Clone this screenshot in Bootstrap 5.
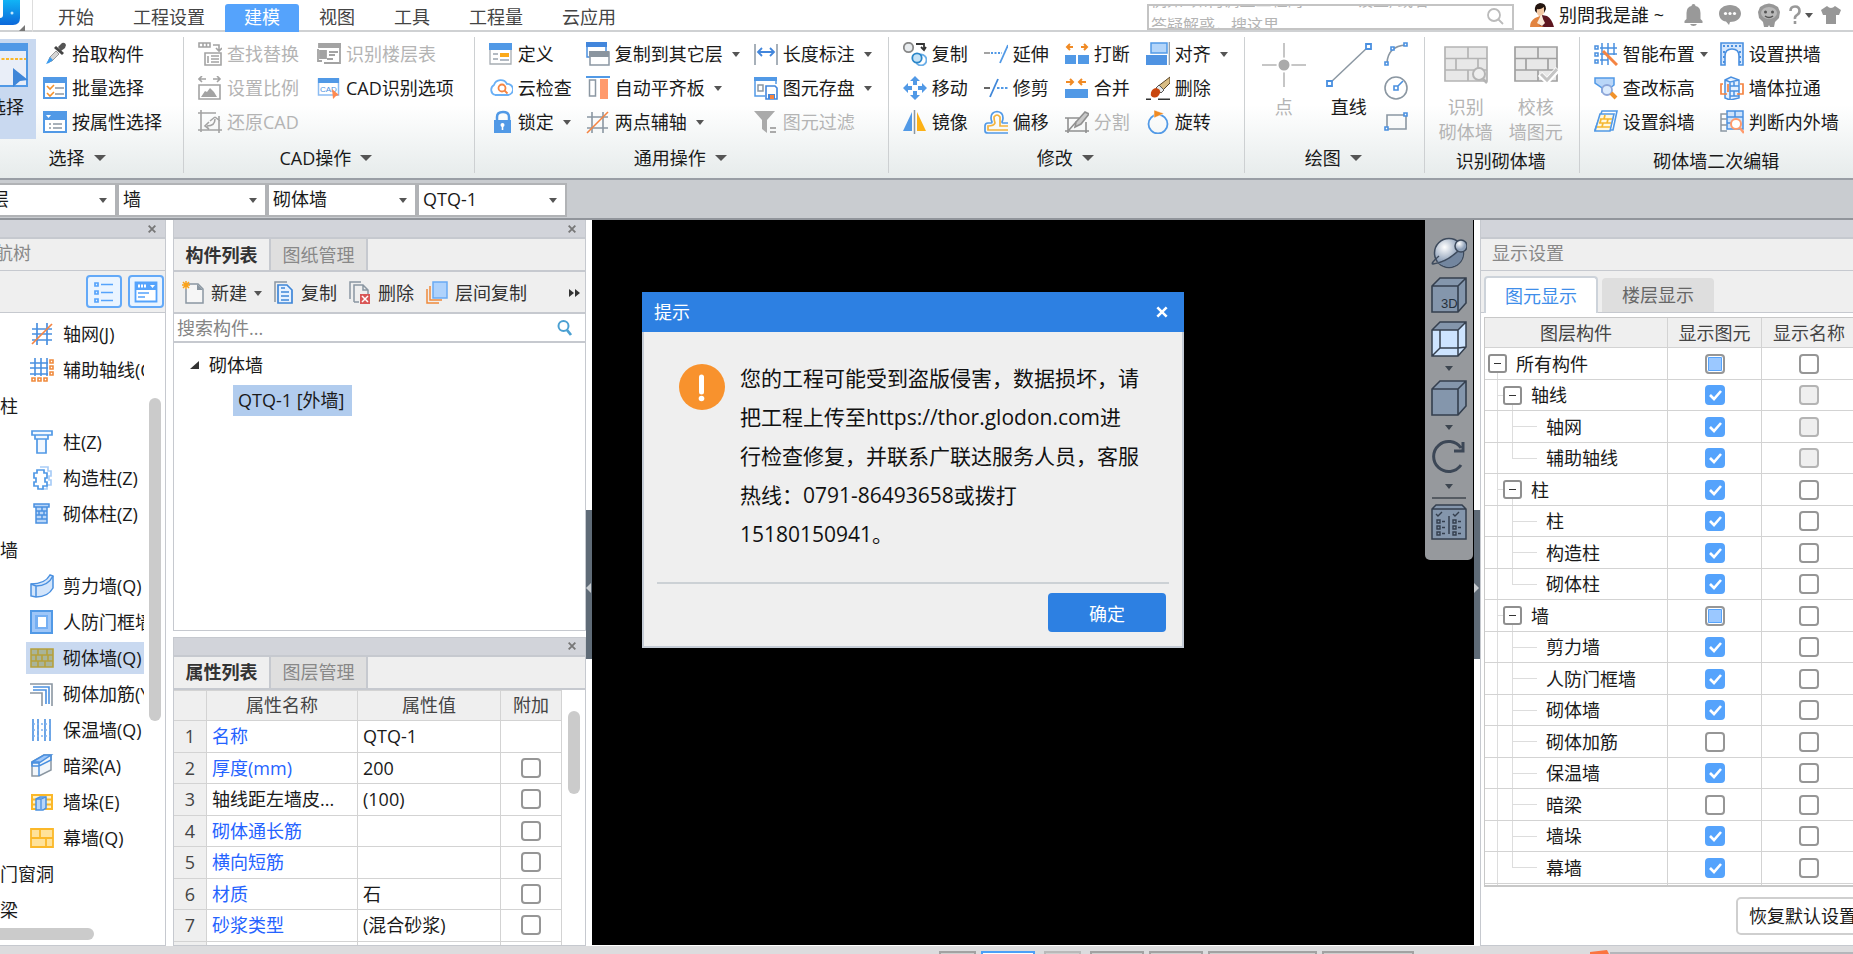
<!DOCTYPE html>
<html lang="zh-CN">
<head>
<meta charset="utf-8">
<meta name="viewport" content="width=device-width, initial-scale=1">
<title>建模</title>
<link rel="stylesheet" href="https://cdn.jsdelivr.net/npm/bootstrap@5.3.0/dist/css/bootstrap.min.css">
<script src="https://cdn.jsdelivr.net/npm/bootstrap@5.3.0/dist/js/bootstrap.bundle.min.js"></script>
<style>
  :root { --blue:#5199e6; --sky:#55a3fc; --line:#c6c9cf; --pane:#efefef; --off:#b4b4b4; --ink:#1a1a1a; }
  body { font:18px/24px "Open Sans","Noto Sans CJK SC",sans-serif; color:var(--ink); background:#fff; height:100vh; overflow:hidden; }
  button { background:none; border:0; padding:0; color:inherit; white-space:nowrap; }
  svg { flex:none; display:block; }
  .caret { flex:none; width:0; height:0; border:4px solid transparent; border-top:5px solid #555; border-bottom:0; margin-left:4px; }
  .caret-lg { border-width:6px 6px 0; margin-left:9px; }

  /* title bar */
  .title-bar { height:32px; border-bottom:2px solid #cfd1d3; padding-right:12px; }
  .app-logo { width:33px; height:32px; border-right:1px solid #ddd; }
  .main-tabs { gap:1px; padding-left:6px; color:#444; }
  .main-tabs a { color:inherit; text-decoration:none; padding:1px 19px 3px; margin-top:4px; height:28px; }
  .main-tabs a.current { background:var(--sky); color:#fff; border-radius:3px 3px 0 0; }
  .ask-box { width:367px; height:26px; border:2px solid #c4c4c4; margin-top:4px; }
  .ask-box textarea { border:0; resize:none; outline:0; overflow:hidden; width:290px; height:48px; margin-top:-18px; padding:0 2px; font-size:16px; line-height:25px; }
  .ask-box textarea::placeholder { color:#b4b4b4; opacity:1; }
  .sys-icons { margin-left:20px; }

  /* ribbon */
  .ribbon { height:148px; border-bottom:2px solid #999ea5; background:linear-gradient(#fff 0,#fff 50%,#e6ebeb 100%); padding-top:5px; }
  .rgroup { position:relative; padding:0 17px 0 14px; }
  .rgroup::after { content:""; position:absolute; right:0; top:0; height:136px; width:1px; background:#cdd0d2; }
  .rgroup:last-child::after { display:none; }
  .cmds { display:grid; grid-auto-flow:column; grid-template-rows:repeat(3,34px); column-gap:16px; justify-items:start; }
  .cmd { display:flex; align-items:center; gap:5px; }
  .off, .cmd:disabled { color:var(--off); }
  .rlabel { height:38px; display:flex; align-items:center; justify-content:center; }
  .rlabel.plain { padding-top:6px; }
  .g-select { margin-left:-36px; padding:0 22px 0 12px; }
  .g-select .rlabel { padding-left:16px; }
  .g-cad { padding-right:21px; }
  .g-cad .cmds { column-gap:18px; }
  .g-common .cmds { column-gap:14px; }
  .g-edit { padding-right:24px; }
  .g-edit .cmds { column-gap:12px; }
  .big { display:flex; flex-direction:column; align-items:center; padding-top:6px; height:102px; line-height:25px; }
  .big svg { margin-bottom:8px; }
  .big.chosen { width:60px; height:100px; background:#c9d9f0; margin:2px 7px 0 0; padding-top:4px; }
  .pt-big { margin:0 20px 0 3px; }

  /* selector bar */
  .pick-bar { height:40px; background:#c9ccd0; border-bottom:2px solid #91959b; padding-top:3px; }
  .pick-bar select { appearance:none; width:150px; height:34px; border:2px solid #b1b3b6; border-radius:0; padding:0 4px 2px; color:var(--ink);
    background:#fff url("data:image/svg+xml,%3Csvg xmlns='http://www.w3.org/2000/svg' width='8' height='5'%3E%3Cpath d='M0 0h8L4 5z' fill='%23555'/%3E%3C/svg%3E") no-repeat right 8px center; }
  .pick-bar select:first-child { margin-left:-33px; }

  /* docked panes */
  .pane { display:flex; flex-direction:column; border:1px solid var(--line); border-top:0; background:#fff; min-height:0; overflow:hidden; }
  .grip { height:19px; flex:none; background:#d2d4da; border-bottom:2px solid var(--line); display:flex; align-items:center; justify-content:flex-end; padding-right:8px; }
  .pane-head { height:32px; flex:none; background:var(--pane); border-bottom:1px solid var(--line); color:#888; }
  .nav-pane { width:166px; border-left:0; }
  .nav-pane .pane-head { padding:2px 0 0; }
  .nav-pane .pane-head span { margin-left:-23px; }
  .nav-tools { height:42px; flex:none; background:var(--pane); border-bottom:1px solid var(--line); display:flex; gap:6px; justify-content:flex-end; padding:4px 1px 0 0; }
  .nav-tools button { width:36px; height:33px; border:2px solid #63a9f8; border-radius:4px; background:#eaf4ff; display:flex; align-items:center; justify-content:center; }
  .nav-list { width:144px; list-style:none; margin:0; padding:3px 0 0; overflow:hidden; white-space:nowrap; }
  .nav-list li { height:36px; display:flex; align-items:center; gap:9px; padding-left:30px; }
  .nav-list li.cat { padding-left:0; }
  .nav-list li.chosen { background:linear-gradient(#c9d9f0,#c9d9f0) 26px 2px / 118px 32px no-repeat; }
  .thumb { position:absolute; background:#cbcbcb; border-radius:6px; }
  .thumb-v { right:4px; width:12px; }
  .nav-pane .thumb-v { top:178px; height:323px; }
  .thumb-h { left:-10px; width:104px; height:12px; bottom:5px; }

  .mid-col { width:413px; gap:6px; margin-left:7px; }
  .comp-pane { flex:4 1 0; }
  .prop-pane { flex:3 1 0; border-top:1px solid var(--line); }
  .tab-strip { height:33px; flex:none; background:var(--pane); border-bottom:2px solid var(--line); display:flex; }
  .tab-strip button { width:97px; border-right:2px solid var(--line); color:#888; background:#dfdfdf; }
  .tab-strip button.current { background:var(--pane); color:#333; font-weight:600; }
  .comp-tools { height:42px; flex:none; background:var(--pane); border-bottom:2px solid var(--line); display:flex; align-items:center; color:#333; padding:2px 3px 0 8px; }
  .comp-tools .cmd { gap:7px; margin-right:12px; }
  .find-row { height:29px; flex:none; border-bottom:2px solid var(--line); display:flex; align-items:center; padding:0 12px 0 3px; }
  .find-row input { border:0; outline:0; padding:0; flex:1; min-width:0; line-height:24px; }
  .find-row input::placeholder { color:#858585; opacity:1; }
  .tree-node { display:flex; align-items:center; gap:9px; padding:10px 0 0 15px; }
  .tree-leaf { display:inline-block; margin:8px 0 0 59px; padding:3px 8px 4px 5px; background:#b1ccee; }

  .sheet { table-layout:fixed; background:#fff; }
  .sheet th, .sheet td { border:1px solid #d3d3d3; padding:0 5px; font-weight:400; white-space:nowrap; overflow:hidden; }
  .sheet tr { height:32px; }
  .sheet tbody tr:nth-child(even) { height:31px; }
  .sheet thead th { background:var(--pane); text-align:center; color:#444; padding:0; }
  .sheet tbody th { background:var(--pane); text-align:center; color:#444; padding:0; }
  .sheet .pick { text-align:center; padding:0; }
  .props { width:388px; margin-left:-1px; }
  .sheet thead tr { height:30px; }
  .props .key { color:#2563ff; }
  .prop-body { flex:1; min-height:0; overflow:hidden; position:relative; }
  .prop-body .thumb-v { top:21px; height:83px; right:5px; }
  .tick { appearance:none; display:block; margin:0 auto; width:20px; height:20px; border:2px solid #969696; border-radius:4px; background:#fff center/16px no-repeat; }
  .tick:disabled { background-color:#efefef; border-color:#b4b4b4; }
  .tick:checked { border-color:var(--sky); background-color:var(--sky); background-image:url("data:image/svg+xml,%3Csvg xmlns='http://www.w3.org/2000/svg' viewBox='0 0 16 16'%3E%3Cpath d='M3 8l4 4 7-8' fill='none' stroke='%23fff' stroke-width='2.6'/%3E%3C/svg%3E"); }
  .tick:indeterminate { background-image:linear-gradient(#9bc8ff,#9bc8ff); background-size:12px; box-shadow:inset 0 0 0 1px #fff, inset 0 0 0 2px var(--sky); }

  /* viewport */
  .side-handle { width:6px; position:relative; }
  .side-handle::before { content:""; position:absolute; left:0; right:0; top:40%; height:149px; background:#5f6b77; }
  .side-handle svg { position:absolute; left:0; top:50%; }
  .viewport { background:#000; flex:1; min-width:0; position:relative; margin-bottom:1px; }
  .view-tools { position:absolute; right:1px; top:0; width:48px; height:340px; background:#96999d; border-radius:0 0 5px 5px; display:flex; flex-direction:column; align-items:center; padding-top:17px; }
  .view-tools .caret { border-top-color:#3d4650; margin:9px 0; }
  .view-tools hr { width:34px; margin:8px 0 5px; border-top:2px solid #555b62; opacity:1; }
  .dlg { position:absolute; left:50px; top:72px; width:542px; height:356px; background:var(--pane); border:2px solid #c5ccd6; border-top:0; color:#111; display:flex; flex-direction:column; }
  .dlg-head { height:40px; background:#2d80e2; color:#fff; margin:0 -2px; padding:0 15px 0 12px; display:flex; align-items:center; justify-content:space-between; }
  .dlg-body { flex:1; display:flex; gap:15px; padding:27px 0 0 35px; font-size:21px; line-height:39px; white-space:nowrap; }
  .dlg-body svg { margin-top:5px; }
  .dlg-body p { margin:0; }
  .dlg-foot { margin:0 13px; border-top:2px solid #ccd1d5; padding:9px 3px 14px; text-align:right; }
  .dlg-foot button { background:#2d80e2; color:#fff; border-radius:4px; width:118px; height:39px; padding-top:2px; }

  /* display settings */
  .show-pane { width:373px; border-right:0; }
  .show-pane .pane-head { padding:2px 11px; }
  .show-tabs { height:42px; flex:none; background:var(--pane); border-bottom:1px solid var(--line); display:flex; align-items:flex-end; gap:4px; padding-left:3px; }
  .show-tabs button { width:112px; height:34px; background:#dedede; color:#666; border-radius:4px 4px 0 0; }
  .show-tabs button.current { width:114px; height:37px; margin-bottom:-1px; background:#fff; color:#3f8eea; border:2px solid #cdd3da; border-bottom:0; }
  .show-wrap { margin:4px 0 0 3px; height:570px; overflow:hidden; border:solid #c8c8c8; border-width:1px 0 2px 1px; flex:none; }
  .show-tbl { width:372px; margin:-1px 0 0 -1px; }
  .show-tbl .n0 { padding-left:3px; background:linear-gradient(#ddd,#ddd) 12px 100%/1px 50% no-repeat; }
  .show-tbl .n1 { padding-left:18px; background:linear-gradient(#ddd,#ddd) 12px 0/1px 100% no-repeat, linear-gradient(#ddd,#ddd) 12px 50%/8px 1px no-repeat, linear-gradient(#ddd,#ddd) 27px 100%/1px 50% no-repeat; }
  .show-tbl .n2 { padding-left:61px; background:linear-gradient(#ddd,#ddd) 12px 0/1px 100% no-repeat, linear-gradient(#ddd,#ddd) 27px 50%/25px 1px no-repeat, linear-gradient(#ddd,#ddd) 27px 0/1px 100% no-repeat; }
  .show-tbl .n2.end { background-size:1px 100%,25px 1px,1px 50%; }
  .show-tbl .rest { background:linear-gradient(#ddd,#ddd) 12px 0/1px 100% no-repeat; }
  .fold { width:19px; height:19px; border:2px solid #8f8f8f; border-radius:3px; background:#fff; position:relative; flex:none; }
  .fold::after { content:""; position:absolute; left:4px; top:7px; width:7px; height:1px; background:#333; }
  .node { display:flex; align-items:center; gap:9px; }
  .reset-btn { align-self:flex-end; margin:10px -17px 0 0; width:134px; height:38px; border:2px solid #cfcfcf; border-radius:5px; flex:none; }

  .status-bar { height:8px; background:#dcdcde; padding:5px 0 0 939px; overflow:hidden; gap:5px; flex:none; }
  .status-bar span { height:12px; border:2px solid #a2a2a2; background:#cfcfcf; flex:none; }
  .status-bar .on { background:#fff; border-color:#4ba0f8; margin-right:4px; }
  .status-bar .dim { border-color:#b9b9b9; margin-right:4px; }
  .status-bar svg { margin:-1px 0 0 171px; }
  .w1 { width:37px; } .w2 { width:54px; } .w3 { width:109px; } .w4 { width:92px; }
</style>
</head>
<body class="d-flex flex-column">

<svg width="0" height="0" class="position-absolute" aria-hidden="true">
  <symbol id="i-bricks" viewBox="0 0 44 36"><path d="M1 1h42v34H1z" fill="#e8e8e8"/><path d="M1 1h42v34H1zM1 12.500h42M1 24h42M24 1v11M12 12v12M34 12v12M24 24v11" fill="none" stroke="currentColor" stroke-width="1.700"/></symbol>
  <symbol id="i-x" viewBox="0 0 12 12"><path d="M2 2l8 8M10 2l-8 8" stroke="currentColor" stroke-width="2.200" fill="none"/></symbol>
  <symbol id="i-cube" viewBox="0 0 36 36"><path d="M1 9L9 1h26v25l-8 9H1z" fill="#8496ac"/><path d="M1 9L9 1h26v25l-8 9H1zM1 9h26v26M27 9l8-8" fill="none" stroke="#343f4e" stroke-width="1.600"/></symbol>
</svg>

<header class="title-bar d-flex flex-shrink-0">
  <div class="app-logo flex-shrink-0"><svg width="32" height="32"><defs><linearGradient id="lg" x2="0" y2="1"><stop stop-color="#11b4f5"/><stop offset="1" stop-color="#0c68da"/></linearGradient></defs><path d="M0 0h20v18q0 7-7 7H0z" fill="url(#lg)"/><path d="M0 0h3v15q0 3-3 3z" fill="#fff"/><circle cx="12" cy="13" r="1.500" fill="#bfe8ff"/><path d="M25 25v6h-6z" fill="#777"/></svg></div>
  <nav class="main-tabs d-flex"><a href="#">开始</a><a href="#">工程设置</a><a href="#" class="current">建模</a><a href="#">视图</a><a href="#">工具</a><a href="#">工程量</a><a href="#">云应用</a></nav>
  <div class="ask-box ms-auto d-flex justify-content-between overflow-hidden"><textarea aria-label="搜索" placeholder="例如: 如何调整工程的 Home 设置, 或者&#10;答疑解惑，搜这里"></textarea><svg width="18" height="20" viewBox="0 0 18 20" class="me-2" fill="none" stroke="#bbb" stroke-width="1.800"><circle cx="8" cy="9" r="6"/><path d="M12 13l5 5"/></svg></div>
  <div class="d-flex align-items-center ms-3">
    <svg width="25" height="25" viewBox="0 0 25 25"><path d="M5 8Q4 1 10 0q6 0 6 6l-2 4H7z" fill="#241510"/><path d="M7 6q3 1 7-2v6q-2 4-5 3-3-2-2-7z" fill="#f3c9a4"/><path d="M0 24q0-6 5-9l5-2 5 6 3 5z" fill="#e2833f"/><path d="M12 12l5 1q5 3 7 11H14l-5-2 4-4z" fill="#5d1620"/><path d="M11 12l4 8-3 3-5-3z" fill="#fbead9"/></svg>
    <button class="ms-1">别問我是誰 ~</button>
  </div>
  <div class="sys-icons d-flex align-items-center">
    <svg width="19" height="24" viewBox="0 0 19 24" fill="#999"><path d="M9.500 1q2 0 2 2 5 1 5 7v6l2 2v2H.5v-2l2-2v-6q0-6 5-7 0-2 2-2zM6 21h7q-1 2-3.500 2T6 21z"/></svg>
    <svg width="22" height="20" viewBox="0 0 22 20" class="ms-3"><path d="M11 0c6 0 11 3.500 11 8.500S17 17 11 17l-1 3-3-3.500C3 16 0 13 0 8.500 0 3.500 5 0 11 0z" fill="#999"/><g fill="#fff"><circle cx="6.500" cy="8.500" r="1.600"/><circle cx="11" cy="8.500" r="1.600"/><circle cx="15.500" cy="8.500" r="1.600"/></g></svg>
    <svg width="24" height="24" viewBox="0 0 24 24" class="ms-3"><path d="M3 4Q12-3 21 4l2 5-1 6-4 4-1 5h-4l-1-2-1 2H7l-1-5-4-4-1-6z" fill="#979797"/><ellipse cx="12" cy="10" rx="8" ry="6" fill="#b9b9b9"/><circle cx="8.500" cy="9" r="1.500" fill="#555"/><circle cx="15.500" cy="9" r="1.500" fill="#555"/><path d="M8 13q4 3 8 0" stroke="#555" stroke-width="1.500" fill="none"/></svg>
    <svg width="12" height="20" viewBox="0 0 12 20" class="ms-2" fill="none" stroke="#999" stroke-width="2.600"><path d="M1.500 6q0-4.500 4.500-4.500T10.500 6q0 2.500-2.500 4t-2 4M6 16v3"/></svg>
    <span class="caret"></span>
    <svg width="20" height="18" viewBox="0 0 20 18" class="ms-2" fill="#979797"><path d="M6 0q4 4 8 0l6 4-2 5h-3v9H5V9H2L0 4z"/></svg>
  </div>
</header>

<section class="ribbon d-flex flex-shrink-0">
  <div class="rgroup g-select">
    <div class="d-flex">
      <button class="big chosen"><svg width="44" height="44" viewBox="0 0 44 44"><path d="M1 1h42v42H1z" fill="#e9eef8" stroke="#5199e6" stroke-width="2"/><path d="M0 0h44v8H0z" fill="#5199e6"/><path d="M4 16h38" stroke="#fbb829" stroke-width="2" stroke-dasharray="3 1.500"/><path d="M29 25l15 12-8 1-7 6z" fill="#3f86d8"/></svg>选择</button>
      <div class="cmds">
        <button class="cmd"><svg width="24" height="24" viewBox="0 0 24 24"><path d="M15 5l4-4q3-1 4 2l-1 3-4 3z" fill="#555"/><path d="M13 4l8 7-2 2-8-7z" fill="#444"/><path d="M13 9l3 3-7 7-4 1 2-5z" fill="#d5d5d5" stroke="#999"/><path d="M7 15l3 3-4 3-3 1z" fill="#3c9cf0"/></svg>拾取构件</button>
        <button class="cmd"><svg width="24" height="24" viewBox="0 0 24 24"><path d="M1 2h22v20H1z" fill="#fff" stroke="#5199e6" stroke-width="2"/><path d="M0 1h24v6H0z" fill="#5199e6"/><path d="M4 10l3 3 4-4M4 17l3 3 4-4" stroke="#f4912c" stroke-width="1.600" fill="none"/><path d="M12 12h9M12 18h9" stroke="#8b97a2" stroke-width="1.600"/></svg>批量选择</button>
        <button class="cmd"><svg width="24" height="24" viewBox="0 0 24 24"><path d="M1 2h22v20H1z" fill="#fff" stroke="#5199e6" stroke-width="2"/><path d="M0 1h24v9H0z" fill="#5199e6"/><path d="M3 5h5L5.500 8z" fill="#fff"/><path d="M6 14h2M10 14h9M6 18h2M10 18h9" stroke="#8b97a2" stroke-width="1.600"/></svg>按属性选择</button>
      </div>
    </div>
    <div class="rlabel">选择<span class="caret caret-lg"></span></div>
  </div>
  <div class="rgroup g-cad">
    <div class="cmds">
      <button class="cmd" disabled><svg width="24" height="24" viewBox="0 0 24 24" fill="none" stroke="#a3a3a3" stroke-width="1.600"><path d="M1 1h11v4H1zM5 1v4M8.500 1v4M15 3h6v5M18 6l3 3 3-3M7 11h16v12H7zM10 14v7M13 14h8M13 17h8M13 20h8"/></svg>查找替换</button>
      <button class="cmd" disabled><svg width="24" height="24" viewBox="0 0 24 24" fill="none" stroke="#a3a3a3" stroke-width="1.600"><path d="M1 9h21v14H1zM1 3h7M4 0L1 3l3 3M15 3h7M19 0l3 3-3 3"/><path d="M3 21l4-6 2 1 3-4 4 4 3 5z" fill="#a3a3a3" stroke="none"/></svg>设置比例</button>
      <button class="cmd" disabled><svg width="24" height="24" viewBox="0 0 24 24" fill="none" stroke="#a3a3a3" stroke-width="1.600"><path d="M0 3h18M21 6v17M3 0v22M0 20h24M9 16q8 0 8-7M17 7l-5 4M17 7l5 4M11 12l-4 4 4 3"/></svg>还原CAD</button>
      <button class="cmd" disabled><svg width="24" height="24" viewBox="0 0 24 24" fill="none" stroke="#a3a3a3" stroke-width="1.800"><path d="M3 6V2h20v19H7"/><path d="M2 2h21v3H2zM3 9h6v7H3z" fill="#a3a3a3"/><path d="M1 7v12h4M12 10h9M12 13h6M10 17h6"/></svg>识别楼层表</button>
      <button class="cmd"><svg width="24" height="24" viewBox="0 0 24 24"><path d="M1.500 3h20v16h-20z" fill="#fff" stroke="#8cbcf2" stroke-width="1.500"/><path d="M1 2h21v5H1z" fill="#5199e6"/><text x="3" y="16" font-size="8" font-family="Liberation Sans" fill="#4a90e0">CAD</text><path d="M15 13l7 6-3 1-3 3z" fill="#ff8a50"/></svg>CAD识别选项</button>
    </div>
    <div class="rlabel">CAD操作<span class="caret caret-lg"></span></div>
  </div>
  <div class="rgroup g-common">
    <div class="cmds">
      <button class="cmd"><svg width="24" height="24" viewBox="0 0 24 24"><path d="M1 2h21v20H1z" fill="#fff" stroke="#a7adb3" stroke-width="1.300"/><path d="M0 1h23v7H0z" fill="#5199e6"/><path d="M11 11h9v4h-9z" fill="#fba919"/><path d="M4 12h5M4 17h5M11 18h9" stroke="#9aa4ae" stroke-width="1.500"/></svg>定义</button>
      <button class="cmd"><svg width="24" height="24" viewBox="0 0 24 24" fill="none" stroke-width="1.800"><path d="M6 19a5.500 5.500 0 01-1-10 7 7 0 0113-1 5.500 5.500 0 011 11H6" stroke="#6ab0f6"/><circle cx="13" cy="12" r="3.500" stroke="#f58442"/><path d="M15.500 14.500l3 3" stroke="#f58442"/></svg>云检查</button>
      <button class="cmd"><svg width="24" height="24" viewBox="0 0 24 24"><path d="M8 12V7q0-5 6-5t6 5v5" fill="none" stroke="#5199e6" stroke-width="2.500"/><path d="M5 10h17v13H5z" fill="#5199e6"/><circle cx="13.500" cy="15" r="2" fill="#fff"/><path d="M13.500 15v5" stroke="#fff" stroke-width="1.600"/></svg>锁定<span class="caret"></span></button>
      <button class="cmd"><svg width="24" height="24" viewBox="0 0 24 24"><path d="M1 1h19v14H1z" fill="#fff" stroke="#4a90e0" stroke-width="1.500"/><path d="M0 0h21v5H0z" fill="#4286dc"/><path d="M4 10h19v13H4z" fill="#fff" stroke="#8b97a2" stroke-width="1.500"/><path d="M3 9h20v6H3z" fill="#8b959f"/></svg>复制到其它层<span class="caret"></span></button>
      <button class="cmd"><svg width="24" height="24" viewBox="0 0 24 24"><path d="M0 1h24" stroke="#5199e6" stroke-width="2"/><path d="M3.500 4h6v16h-6z" fill="#fff" stroke="#8b97a2" stroke-width="1.500"/><path d="M14 3h8v20h-8z" fill="#ff9a6c"/></svg>自动平齐板<span class="caret"></span></button>
      <button class="cmd"><svg width="24" height="24" viewBox="0 0 24 24" fill="none" stroke="#8b97a2" stroke-width="1.600"><path d="M6 2v21M17 2v21M1 7h21M1 18h21"/><path d="M22 2L1 23" stroke="#f58442"/></svg>两点辅轴<span class="caret"></span></button>
      <button class="cmd"><svg width="24" height="24" viewBox="0 0 24 24" fill="none"><path d="M1 2v21M23 2v21" stroke="#8b97a2" stroke-width="1.500"/><path d="M4 10h16M8 6l-4 4 4 4M16 6l4 4-4 4" stroke="#4286dc" stroke-width="1.800"/></svg>长度标注<span class="caret"></span></button>
      <button class="cmd"><svg width="24" height="24" viewBox="0 0 24 24"><path d="M11 20H1V2h21v6" fill="none" stroke="#5199e6" stroke-width="1.500"/><path d="M0 1h23v4H0z" fill="#5199e6"/><path d="M4 9h5v6H4z" fill="none" stroke="#8b97a2" stroke-width="1.500"/><path d="M12 10h9l2 2v11H12z" fill="#fff" stroke="#4286dc" stroke-width="1.600"/><path d="M14 18h7v5h-7z" fill="#4286dc"/><path d="M16 19h4v4h-4z" fill="#f58442"/></svg>图元存盘<span class="caret"></span></button>
      <button class="cmd" disabled><svg width="24" height="24" viewBox="0 0 24 24" fill="#aaa"><path d="M0 1h21l-8 9v13l-5-4v-9z"/><path d="M16 17h6v2h-6zM16 21h6v2h-6z"/></svg>图元过滤</button>
    </div>
    <div class="rlabel">通用操作<span class="caret caret-lg"></span></div>
  </div>
  <div class="rgroup">
    <div class="cmds">
      <button class="cmd"><svg width="24" height="24" viewBox="0 0 24 24" fill="none" stroke-width="1.800"><circle cx="5.500" cy="5.500" r="4.700" stroke="#888" fill="#e8ecef"/><path d="M13 2h8v5M18 5l3 3 2-3" stroke="#333"/><circle cx="18" cy="18" r="5.500" stroke="#6aaee8"/><circle cx="14" cy="16" r="4.700" stroke="#2b86c8" fill="#c5e2f6"/></svg>复制</button>
      <button class="cmd"><svg width="24" height="24" viewBox="0 0 24 24" fill="#5199e6"><path d="M12 0l5 5h-3v4h-4V5H7zM12 24l5-5h-3v-4h-4v4H7zM0 12l5-5v3h4v4H5v3zM24 12l-5-5v3h-4v4h4v3z"/></svg>移动</button>
      <button class="cmd"><svg width="24" height="24" viewBox="0 0 24 24"><path d="M9 2v19H0z" fill="#5199e6"/><path d="M14 2v19h9z" fill="#fcb116"/><path d="M11.500 0v24" stroke="#8b97a2" stroke-width="1.500"/></svg>镜像</button>
      <button class="cmd"><svg width="24" height="24" viewBox="0 0 24 24" fill="none" stroke-width="1.800"><path d="M0 11h6" stroke="#999"/><path d="M7 11h11" stroke="#5199e6" stroke-dasharray="2 1.500"/><path d="M24 3l-8 18" stroke="#5199e6"/></svg>延伸</button>
      <button class="cmd"><svg width="24" height="24" viewBox="0 0 24 24" fill="none" stroke-width="1.800"><path d="M0 12h6" stroke="#555"/><path d="M13 12h12" stroke="#5199e6" stroke-dasharray="2.500 1.500"/><path d="M14 3L6 21" stroke="#3f86d8"/></svg>修剪</button>
      <button class="cmd"><svg width="24" height="24" viewBox="0 0 24 24" fill="none"><path d="M1 21v-5q0-3 3-3h3q1 0 1-1-1-2-1-4 0-6 6-6.500 6 .5 6 6.500 0 2-1 4 0 1 2 1h4M1 21q0 2 3 2h20" stroke="#5199e6" stroke-width="1.700"/><path d="M24 16h-8V7q-3-4-6 0 0 3 1 6-1 3-7 3v4h20" stroke="#f4b33c" stroke-width="1.700"/></svg>偏移</button>
      <button class="cmd"><svg width="24" height="24" viewBox="0 0 24 24"><path d="M0 13h11v9H0zM13 13h11v9H13z" fill="#5199e6"/><path d="M8 5H2M5 2L2 5l3 3M16 5h6M19 2l3 3-3 3" stroke="#f08a24" stroke-width="2" fill="none"/></svg>打断</button>
      <button class="cmd"><svg width="24" height="24" viewBox="0 0 24 24"><path d="M0 13h23v9H0z" fill="#5199e6"/><path d="M1 6h6M5 3l3 3-3 3M21 6h-6M17 3l-3 3 3 3" stroke="#f08a24" stroke-width="2" fill="none"/></svg>合并</button>
      <button class="cmd" disabled><svg width="24" height="24" viewBox="0 0 24 24" fill="none" stroke="#909090" stroke-width="1.600"><path d="M3 8v15M21 12v11M0 8h14M0 21h24M4 20l7-8h4"/><path d="M11 12l9-10 4 2-8 10-6 3z" fill="#c9c9c9"/></svg>分割</button>
      <button class="cmd"><svg width="24" height="24" viewBox="0 0 24 24"><path d="M5 1h16v10H5z" fill="#b3d5fa" stroke="#5199e6" stroke-width="1.500"/><path d="M0 13h21v10H0z" fill="#4f93e2"/><path d="M23.300 0v23" stroke="#8b97a2" stroke-width="1.200"/></svg>对齐<span class="caret"></span></button>
      <button class="cmd"><svg width="24" height="24" viewBox="0 0 24 24"><path d="M24 1v6l-8 8-5-4z" fill="#d9bd84" stroke="#5a4526"/><path d="M13 9l5 5-3 3-5-5z" fill="#e8e8e8" stroke="#555"/><path d="M10 12q5 1 4 5-2 5-6 4.500-4-.5-3-5 1-4 5-4.500z" fill="#c9470f"/><path d="M0 23.300h5M12 23.300h12" stroke="#333" stroke-width="1.400"/></svg>删除</button>
      <button class="cmd"><svg width="24" height="24" viewBox="0 0 24 24"><circle cx="12" cy="14" r="9.500" fill="none" stroke="#5199e6" stroke-width="1.800"/><path d="M8 0l10 3.500L8 8z" fill="#ef8a24" stroke="#fff" stroke-width=".5"/></svg>旋转</button>
    </div>
    <div class="rlabel">修改<span class="caret caret-lg"></span></div>
  </div>
  <div class="rgroup">
    <div class="d-flex">
      <button class="big off pt-big" disabled><svg width="44" height="44" viewBox="0 0 44 44"><path d="M22 0v44M0 22h44" stroke="#b4b4b4" stroke-width="1.500"/><circle cx="22" cy="22" r="6.500" fill="#aaa" stroke="#fff" stroke-width="2"/></svg>点</button>
      <button class="big"><svg width="46" height="44" viewBox="0 0 46 44" fill="#fff" stroke-width="1.500"><path d="M4 40L42 4" stroke="#8b97a2"/><path d="M1 38h5v5H1zM40 1h5v5h-5z" stroke="#4a90e0" stroke-width="1.800"/></svg>直线</button>
      <div class="cmds ms-2 ps-1">
        <button class="cmd" aria-label="弧"><svg width="24" height="24" viewBox="0 0 24 24" fill="none" stroke-width="1.600"><path d="M3 21Q4 4 22 3" stroke="#8b97a2"/><path d="M1 20h3v3H1zM7 5h3v3H7zM20 1h3v3h-3z" fill="#fff" stroke="#4a90e0"/></svg></button>
        <button class="cmd" aria-label="圆"><svg width="24" height="24" viewBox="0 0 24 24" fill="none" stroke-width="1.600"><circle cx="12" cy="12" r="11" stroke="#8b97a2"/><path d="M10 10h4v4h-4zM14 10l5-5" stroke="#4a90e0"/></svg></button>
        <button class="cmd" aria-label="矩形"><svg width="24" height="24" viewBox="0 0 24 24" fill="none" stroke-width="1.600"><path d="M3 5h19v14H3z" stroke="#8b97a2"/><path d="M1 17h3v3H1zM20 3h3v3h-3z" fill="#fff" stroke="#4a90e0"/></svg></button>
      </div>
    </div>
    <div class="rlabel">绘图<span class="caret caret-lg"></span></div>
  </div>
  <div class="rgroup">
    <div class="d-flex justify-content-between gap-3">
      <button class="big off" disabled><svg width="44" height="44" viewBox="0 0 44 44"><use href="#i-bricks" y="3" width="44" height="36"/><circle cx="35" cy="31" r="6" fill="#eee" stroke="#b4b4b4" stroke-width="2"/><path d="M39 36l4 4" stroke="#b4b4b4" stroke-width="2.500"/></svg>识别<br>砌体墙</button>
      <button class="big off" disabled><svg width="44" height="44" viewBox="0 0 44 44"><use href="#i-bricks" y="3" width="44" height="36" color="#a0a0a0"/><path d="M26 31l7 7 11-12" stroke="#fff" stroke-width="6" fill="none"/><path d="M27 31l6 6 10-11" stroke="#c4c4c4" stroke-width="3" fill="none"/></svg>校核<br>墙图元</button>
    </div>
    <div class="rlabel plain">识别砌体墙</div>
  </div>
  <div class="rgroup g-edit">
    <div class="cmds">
      <button class="cmd"><svg width="24" height="24" viewBox="0 0 24 24" fill="none" stroke="#4a90e0" stroke-width="1.500"><path d="M6 6h17M6 12h17M6 18h8M8 1v22M14 1v22M20 1v12M1 4h3v3H1zM1 11h3v3H1zM1 18h3v3H1z"/><path d="M9 9l14 14" stroke="#f58442" stroke-width="3"/></svg>智能布置<span class="caret ms-0"></span></button>
      <button class="cmd"><svg width="24" height="24" viewBox="0 0 24 24"><path d="M1 2h19v7l-5 4v3H8v-4L1 7z" fill="#b9d6f8" stroke="#5199e6" stroke-width="1.500"/><circle cx="13" cy="14" r="5" fill="#dcebfd" stroke="#8ea6d8" stroke-width="1.800"/><path d="M17 17l5 5" stroke="#f0922c" stroke-width="4"/></svg>查改标高</button>
      <button class="cmd"><svg width="24" height="24" viewBox="0 0 24 24"><path d="M8 1h15l-4 19H1l1-3z" fill="#fff" stroke="#5199e6" stroke-width="1.600"/><path d="M6 4h14l-4 17H1z" fill="#fff8e0" stroke="#5199e6" stroke-width="1.600"/><path d="M6 9h12M5 13h12M3 17h13M11 5l-1 4M7 9l-1 4M14 9l-1 4M9 13l-1 4" stroke="#f5b730" stroke-width="1.700"/></svg>设置斜墙</button>
      <button class="cmd"><svg width="24" height="24" viewBox="0 0 24 24" fill="none"><path d="M1 23V1h22v22h-4v-9q0-7-7-7t-7 7v9z" fill="#d4e6fc" stroke="#4a90e0" stroke-width="1.600"/><path d="M3 4h19M3 10h2M3 15h2M19 10h3M19 15h3M3 20h2M19 20h3" stroke="#4a90e0" stroke-width="2" stroke-dasharray="2 2"/></svg>设置拱墙</button>
      <button class="cmd"><svg width="24" height="24" viewBox="0 0 24 24" fill="none" stroke="#4a90e0" stroke-width="1.500"><path d="M5 4l6-3 8 3v18l-9 2-5-2zM10 6v17M10 10h9M10 15h9M10 20h9M5 4l5 2 9-2M14 6v4M14 15v5" fill="#e6f1ff"/><path d="M3 8H1v10h6M17 18h6V8h-3M8 8v8" stroke="#f58442" stroke-width="1.700"/></svg>墙体拉通</button>
      <button class="cmd"><svg width="24" height="24" viewBox="0 0 24 24" fill="none"><path d="M7 1h16v18H7zM7 7h16M15 1v6M7 13h5" fill="#cfe3fb" stroke="#4a90e0" stroke-width="1.500"/><path d="M7 4H1v17h6M1 9h6M1 15h6" stroke="#8b97a2" stroke-width="1.500"/><circle cx="16" cy="14" r="5" fill="#fff" stroke="#ff9a6c" stroke-width="2"/><path d="M20 18l4 5" stroke="#ff9a6c" stroke-width="2.500"/></svg>判断内外墙</button>
    </div>
    <div class="rlabel plain">砌体墙二次编辑</div>
  </div>
</section>

<section class="pick-bar d-flex flex-shrink-0">
  <select aria-label="楼层"><option>首层</option></select>
  <select aria-label="构件类别"><option>墙</option></select>
  <select aria-label="构件类型"><option>砌体墙</option></select>
  <select aria-label="构件"><option>QTQ-1</option></select>
</section>

<main class="d-flex flex-grow-1 overflow-hidden">
  <aside class="pane nav-pane flex-shrink-0 position-relative">
    <div class="grip"><button aria-label="关闭"><svg width="10" height="10" color="#777"><use href="#i-x"/></svg></button></div>
    <div class="pane-head"><span>导航树</span></div>
    <div class="nav-tools">
      <button aria-label="列表"><svg width="20" height="22" viewBox="0 0 20 22" fill="none" stroke="#55a3fc" stroke-width="1.700"><path d="M1 2h3v3H1zM1 10h3v3H1zM1 18h3v3H1zM7 3.500h12M7 11.500h12M7 19.500h12"/></svg></button>
      <button aria-label="卡片"><svg width="24" height="22" viewBox="0 0 24 22"><path d="M1.500 1.500h21v19h-21z" fill="#fff" stroke="#55a3fc" stroke-width="1.800"/><path d="M1 1h22v8H1z" fill="#55a3fc"/><path d="M4 5h2M7 5h2M10 5h2" stroke="#fff" stroke-width="3"/><path d="M16 4h5l-2.500 3z" fill="#fff"/><path d="M4 12h11M4 16h7" stroke="#55a3fc" stroke-width="1.600"/></svg></button>
    </div>
    <ul class="nav-list">
      <li><svg width="24" height="24" viewBox="0 0 24 24" fill="none" stroke="#4a90e0" stroke-width="1.700"><path d="M7 1v22M17 1v22M2 7h20M2 12h20M2 18h20"/><path d="M22 2L2 22" stroke="#f58442"/></svg>轴网(J)</li>
      <li><svg width="24" height="24" viewBox="0 0 24 24" fill="none" stroke="#4a90e0" stroke-width="1.600"><path d="M5 0v18M11 0v18M17 0v18M0 5h18M0 10h18M0 16h18"/><path d="M20 2h3v3h-3zM20 8h3v3h-3zM20 14h3v3h-3zM2 20h3v3H2zM8 20h3v3H8zM14 20h3v3h-3z" stroke="#f08a3c"/></svg>辅助轴线(O)</li>
      <li class="cat">柱</li>
      <li><svg width="24" height="24" viewBox="0 0 24 24" fill="#f2f8ff" stroke="#5199e6" stroke-width="1.700"><path d="M7 9h9v14H7zM5 5h13v4H5zM2 1h20v4H2z"/></svg>柱(Z)</li>
      <li><svg width="24" height="24" viewBox="0 0 24 24" stroke-width="1.700"><path d="M10 1h8v4h3v5h-2v4h2v5h-4v4h-6" fill="none" stroke="#a9cdf7"/><path d="M7 4h7v3h3v5h-2v4h2v4h-4v3H8v-3H4v-4h2v-4H4V7h3z" fill="#fff" stroke="#5199e6"/></svg>构造柱(Z)</li>
      <li><svg width="24" height="24" viewBox="0 0 24 24" fill="#b9d6f8" stroke="#4a90e0" stroke-width="1.500"><path d="M4 2h15v3H4zM6 5h11v16H6zM6 9h11M6 13h11M6 17h11M12 5v4M9 9v4M14 9v4M12 13v4"/></svg>砌体柱(Z)</li>
      <li class="cat">墙</li>
      <li><svg width="24" height="24" viewBox="0 0 24 24" stroke="#4a90e0" stroke-width="1.500"><path d="M1 10q14 0 19-9l3 1v12q-5 9-17 9l-5-1z" fill="#d3e5fb"/><path d="M1 10l5 2q12 0 17-10M6 12v11" fill="none"/></svg>剪力墙(Q)</li>
      <li><svg width="24" height="24" viewBox="0 0 24 24"><path d="M1 1h21v22H1z" fill="#9ec6f8" stroke="#5199e6" stroke-width="2"/><path d="M5 5h13v14H5z" fill="#75aff3"/><path d="M8 7h8v10H8z" fill="#fff"/></svg>人防门框墙(RF)</li>
      <li class="chosen"><svg width="24" height="24" viewBox="0 0 24 24"><path d="M1 3h22v18H1zM1 9h22M1 15h22M8 3v6M17 3v6M12 9v6M6 9v6M18 9v6M8 15v6M15 15v6" fill="#a9b49a" stroke="#b5a03c" stroke-width="1.600"/></svg>砌体墙(Q)</li>
      <li><svg width="24" height="24" viewBox="0 0 24 24" fill="none" stroke-width="1.600"><path d="M0 2h22v22M0 11h12v13" stroke="#8b97a2"/><path d="M3 5h16v17M3 8h13v14" stroke="#4a90e0"/></svg>砌体加筋(Y)</li>
      <li><svg width="24" height="24" viewBox="0 0 24 24" fill="none" stroke="#4a90e0" stroke-width="1.600"><path d="M3 1v22M8 1v22M15 1v22M20 1v22"/><path d="M3 6h17M3 12h17M3 18h17" stroke-dasharray="2 2" stroke="#7fb2f0"/></svg>保温墙(Q)</li>
      <li><svg width="24" height="24" viewBox="0 0 24 24" stroke-width="1.500"><path d="M2 8L14 1h7v15L9 22H2z" fill="#f2f6fa" stroke="#8b97a2"/><path d="M2 8L14 1h7L9 9H2z" fill="#9ec6f8" stroke="#4a90e0"/><path d="M2 8h7v4l12-6V1M2 8v4h7M9 12v10" fill="none" stroke="#4a90e0"/></svg>暗梁(A)</li>
      <li><svg width="24" height="24" viewBox="0 0 24 24"><path d="M2 5h20v14H2zM2 9.500h20M2 14.500h20" fill="#fff1c4" stroke="#fbb829" stroke-width="2"/><path d="M6 9l4-2h6v11l-3 2H6z" fill="#b9d6f8" stroke="#4a90e0" stroke-width="1.500"/><path d="M11 9v10M6 9h5l5-2" stroke="#4a90e0" stroke-width="1.300" fill="none"/></svg>墙垛(E)</li>
      <li><svg width="24" height="24" viewBox="0 0 24 24"><path d="M1 3h22v18H1zM1 12h22M10 3v9M16 12v9" fill="#ffe29a" stroke="#fbb829" stroke-width="1.800"/></svg>幕墙(Q)</li>
      <li class="cat">门窗洞</li>
      <li class="cat">梁</li>
    </ul>
    <div class="thumb thumb-v"></div>
    <div class="thumb thumb-h"></div>
  </aside>

  <div class="mid-col d-flex flex-column flex-shrink-0">
    <section class="pane comp-pane">
      <div class="grip"><button aria-label="关闭"><svg width="10" height="10" color="#777"><use href="#i-x"/></svg></button></div>
      <div class="tab-strip"><button class="current">构件列表</button><button>图纸管理</button></div>
      <div class="comp-tools">
        <button class="cmd"><svg width="22" height="24" viewBox="0 0 22 24"><path d="M5 3h11l5 5v14H4V8" fill="#f6f6f6" stroke="#8b97a2" stroke-width="1.500"/><path d="M15 3v6h6" fill="#8b97a2"/><path d="M1 1l6 6M7 1L1 7M4 0v8M0 4h8" stroke="#f9a21b" stroke-width="1.500"/></svg>新建<span class="caret ms-0"></span></button>
        <button class="cmd"><svg width="20" height="24" viewBox="0 0 20 24"><path d="M1 21V1h12" fill="none" stroke="#8b97a2" stroke-width="1.500"/><path d="M4 4h9l5 5v13H4z" fill="#e6f1ff" stroke="#3f86d8" stroke-width="1.700"/><path d="M7 11h8M7 15h8M7 19h8M7 7h4" stroke="#3f86d8" stroke-width="1.400"/></svg>复制</button>
        <button class="cmd"><svg width="22" height="24" viewBox="0 0 22 24"><path d="M1 18V1h11M5 21V4h9l5 5v4M14 4v5h5M5 21h5" fill="none" stroke="#8b97a2" stroke-width="1.500"/><path d="M11 13h10v10H11z" fill="#d95757"/><path d="M13 15l6 6M19 15l-6 6" stroke="#fff" stroke-width="1.500"/></svg>删除</button>
        <button class="cmd"><svg width="22" height="24" viewBox="0 0 22 24"><path d="M1 8v14h12M4 5v14h12" fill="none" stroke="#f08a3c" stroke-width="1.500"/><path d="M7 1h14v16H7z" fill="#aed2fc" stroke="#6aaaf4" stroke-width="1.500"/></svg>层间复制</button>
        <button class="ms-auto" aria-label="更多"><svg width="14" height="10" viewBox="0 0 14 10" fill="#333"><path d="M1 1l5 4-5 4zM7 1l5 4-5 4z"/></svg></button>
      </div>
      <div class="find-row"><input type="text" aria-label="搜索构件" placeholder="搜索构件..."><svg width="16" height="16" viewBox="0 0 16 16" fill="none" stroke="#4ba0d2"><circle cx="6.500" cy="6" r="5" stroke-width="2"/><path d="M10 10l4 5" stroke-width="2.800"/></svg></div>
      <div class="tree-node"><svg width="11" height="10"><path d="M10 1v8H1z" fill="#333"/></svg>砌体墙</div>
      <div><span class="tree-leaf">QTQ-1 [外墙]</span></div>
    </section>
    <section class="pane prop-pane">
      <div class="grip"><button aria-label="关闭"><svg width="10" height="10" color="#777"><use href="#i-x"/></svg></button></div>
      <div class="tab-strip"><button class="current">属性列表</button><button>图层管理</button></div>
      <div class="prop-body">
        <table class="sheet props">
          <colgroup><col style="width:33px"><col style="width:151px"><col style="width:143px"><col style="width:61px"></colgroup>
          <thead><tr><th></th><th>属性名称</th><th>属性值</th><th>附加</th></tr></thead>
          <tbody>
            <tr><th>1</th><td class="key">名称</td><td>QTQ-1</td><td></td></tr>
            <tr><th>2</th><td class="key">厚度(mm)</td><td>200</td><td class="pick"><input class="tick" type="checkbox" aria-label="附加 厚度"></td></tr>
            <tr><th>3</th><td>轴线距左墙皮...</td><td>(100)</td><td class="pick"><input class="tick" type="checkbox" aria-label="附加 轴线距左墙皮"></td></tr>
            <tr><th>4</th><td class="key">砌体通长筋</td><td></td><td class="pick"><input class="tick" type="checkbox" aria-label="附加 砌体通长筋"></td></tr>
            <tr><th>5</th><td class="key">横向短筋</td><td></td><td class="pick"><input class="tick" type="checkbox" aria-label="附加 横向短筋"></td></tr>
            <tr><th>6</th><td class="key">材质</td><td>石</td><td class="pick"><input class="tick" type="checkbox" aria-label="附加 材质"></td></tr>
            <tr><th>7</th><td class="key">砂浆类型</td><td>(混合砂浆)</td><td class="pick"><input class="tick" type="checkbox" aria-label="附加 砂浆类型"></td></tr>
            <tr><th></th><td></td><td></td><td></td></tr>
          </tbody>
        </table>
        <div class="thumb thumb-v"></div>
      </div>
    </section>
  </div>

  <div class="side-handle flex-shrink-0"><svg width="5" height="10"><path d="M5 0v10L0 5z" fill="#c8ccd0"/></svg></div>
  <section class="viewport">
    <div class="view-tools">
      <svg width="36" height="32" viewBox="0 0 36 32"><defs><radialGradient id="pg" cx=".35" cy=".3"><stop stop-color="#fff"/><stop offset="1" stop-color="#8ea0b8"/></radialGradient></defs><circle cx="18" cy="16" r="14.500" fill="url(#pg)" stroke="#3d4a5c" stroke-width="1.500"/><path d="M5 25q14-1 26-14 3 9-3 15-9 7-19 1z" fill="#73869f"/><path d="M8 19q-9 8-6 8 15-2 28-16" fill="none" stroke="#3d4a5c" stroke-width="1.500"/><circle cx="30" cy="9" r="6" fill="url(#pg)" stroke="#3d4a5c" stroke-width="1.500"/></svg>
      <svg width="36" height="36" viewBox="0 0 36 36" class="mt-2"><use href="#i-cube"/><text x="10" y="31" font-size="13" font-family="Liberation Sans" fill="#26303d">3D</text></svg>
      <svg width="36" height="36" viewBox="0 0 36 36" class="mt-2"><path d="M1 9L9 1h26v25l-8 9H1z" fill="#cde4ff"/><path d="M1 9L9 1h26l-8 8z" fill="#8496ac"/><path d="M1 9L9 1h26v25l-8 9H1zM1 9h26v26M27 9l8-8M9 9v18h18M9 27l-8 8M27 27l8-1" fill="none" stroke="#343f4e" stroke-width="1.500"/></svg>
      <span class="caret"></span>
      <svg width="36" height="36"><use href="#i-cube"/></svg>
      <span class="caret"></span>
      <svg width="36" height="36" viewBox="0 0 36 36" fill="none" stroke="#3c4756" stroke-width="3"><path d="M30 26a15 15 0 110-17M32 3v9h-9"/></svg>
      <span class="caret mb-0"></span>
      <hr>
      <svg width="36" height="36" viewBox="0 0 36 36"><path d="M1 5l4-4h26l4 4v30H1z" fill="#8496ac"/><path d="M1 5l4-4h26l4 4v30H1zM1 5h34M18 12v18" fill="none" stroke="#343f4e" stroke-width="1.500"/><path d="M5 10l2 2 4-4M22 10l2 2 4-4M6 16h3v3H6zM6 22h3v3H6zM6 28h3v3H6zM22 16h3v3h-3zM22 22h3v3h-3zM22 28h3v3h-3zM11 17.500h3M11 23.500h3M11 29.500h3M27 17.500h3M27 23.500h3M27 29.500h3" fill="none" stroke="#343f4e" stroke-width="1.400"/></svg>
    </div>
    <div class="dlg" role="dialog" aria-labelledby="dlgTitle">
      <div class="dlg-head"><span id="dlgTitle">提示</span><button aria-label="关闭"><svg width="14" height="14"><use href="#i-x"/></svg></button></div>
      <div class="dlg-body">
        <svg width="46" height="46" viewBox="0 0 46 46"><circle cx="23" cy="23" r="23" fill="#f8922d"/><path d="M22.500 13v15" stroke="#fff" stroke-width="5" stroke-linecap="round"/><circle cx="22.500" cy="34.500" r="2.800" fill="#fff"/></svg>
        <p>您的工程可能受到盗版侵害，数据损坏，请<br>把工程上传至https://thor.glodon.com进<br>行检查修复，并联系广联达服务人员，客服<br>热线：0791-86493658或拨打<br>15180150941。</p>
      </div>
      <div class="dlg-foot"><button class="text-center">确定</button></div>
    </div>
  </section>
  <div class="side-handle flex-shrink-0"><svg width="5" height="10"><path d="M0 0v10l5-5z" fill="#c8ccd0"/></svg></div>

  <aside class="pane show-pane flex-shrink-0">
    <div class="grip"></div>
    <div class="pane-head">显示设置</div>
    <div class="show-tabs"><button class="current">图元显示</button><button>楼层显示</button></div>
    <div class="show-wrap">
      <table class="sheet show-tbl">
        <colgroup><col style="width:183px"><col style="width:94px"><col style="width:95px"></colgroup>
        <thead><tr><th>图层构件</th><th>显示图元</th><th>显示名称</th></tr></thead>
        <tbody id="layers"></tbody>
      </table>
    </div>
    <button class="reset-btn">恢复默认设置</button>
  </aside>
</main>

<footer class="status-bar d-flex"><span class="w1"></span><span class="w2 on"></span><span class="w1 dim"></span><span class="w2"></span><span class="w2"></span><span class="w3"></span><span class="w4"></span><svg width="270" height="6"><path d="M0 2l17-2 3 6H0z" fill="#fb7440"/><path d="M20 3h250" stroke="#8d9097"/></svg></footer>

<script>
  // [level, name, element state (1 on, 0 off, 2 mixed), name column disabled]
  const layers = [
    [0,'所有构件',2],[1,'轴线',1,1],[2,'轴网',1,1],[2,'辅助轴线',1,1],
    [1,'柱',1],[2,'柱',1],[2,'构造柱',1],[2,'砌体柱',1],
    [1,'墙',2],[2,'剪力墙',1],[2,'人防门框墙',1],[2,'砌体墙',1],[2,'砌体加筋',0],[2,'保温墙',1],[2,'暗梁',0],[2,'墙垛',1],[2,'幕墙',1]
  ];
  const body = document.getElementById('layers');
  layers.forEach(([lv, name, on, locked], i) => {
    const end = lv === 2 && (!layers[i + 1] || layers[i + 1][0] < 2) ? ' end' : '';
    const fold = lv < 2 ? '<button class="fold" aria-label="折叠"></button>' : '';
    body.insertAdjacentHTML('beforeend',
      `<tr><td class="n${lv}${end}"><div class="node">${fold}${name}</div></td>
       <td class="pick"><input class="tick" type="checkbox" aria-label="显示图元 ${name}" ${on === 1 ? 'checked' : ''}></td>
       <td class="pick"><input class="tick" type="checkbox" aria-label="显示名称 ${name}" ${locked ? 'disabled' : ''}></td></tr>`);
    if (on === 2) body.lastElementChild.querySelector('.tick').indeterminate = true;
  });
  body.insertAdjacentHTML('beforeend', '<tr><td class="rest"></td><td></td><td></td></tr>');
</script>
</body>
</html>
